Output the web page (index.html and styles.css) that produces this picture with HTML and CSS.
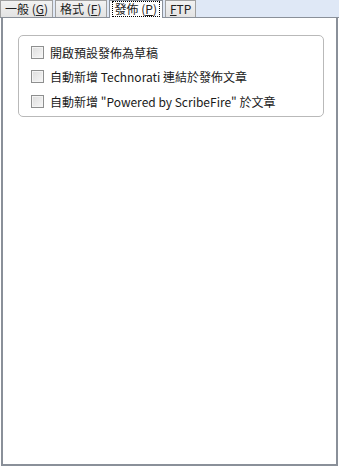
FILE: index.html
```html
<!doctype html>
<html lang="zh-Hant">
<head>
    <meta charset="UTF-8">
    <title>發佈</title>
    <link rel="stylesheet" href="styles.css">
</head>
<body>
    <div class="tabs">
        <div class="tab">一般 (<u>G</u>)</div>
        <div class="tab">格式 (<u>F</u>)</div>
        <div class="tab active"><span class="focus">發佈 (<u>P</u>)</span></div>
        <div class="tab"><u>F</u>TP</div>
    </div>
    <div class="panel">
        <div class="group">
            <label class="row"><span class="box"></span>開啟預設發佈為草稿</label>
            <label class="row"><span class="box"></span>自動新增 Technorati 連結於發佈文章</label>
            <label class="row"><span class="box"></span>自動新增 "Powered by ScribeFire" 於文章</label>
        </div>
    </div>
</body>
</html>
```
FILE: styles.css
```css
html, body {
    margin: 0;
    height: 100%;
}

body {
    display: flex;
    flex-direction: column;
    background: #fff;
    font-family: "Noto Sans CJK TC", "Noto Sans", sans-serif;
    font-size: 12px;
    color: #1a1a1a;
}

.tabs {
    display: flex;
    gap: 2px;
    height: 18px;
    background: #dfe8f6;
    border-bottom: 1px solid #8a9099;
    box-sizing: border-box;
}

.tab {
    height: 17px;
    padding: 0 4px;
    line-height: 16px;
    box-sizing: border-box;
    border: 1px solid #a0a0a0;
    border-bottom: none;
    background: linear-gradient(#f2f2f2, #e3e3e3);
    color: #222;
    white-space: nowrap;
}

.tab.active {
    height: 18px;
    background: #fff;
    margin-bottom: -1px;
    border-color: #8a9099;
    padding: 0 2px;
}

.focus {
    display: inline-block;
    padding: 0 2px;
    line-height: 14px;
    border: 1px dotted #000;
}

.panel {
    flex: 1;
    margin: 0 1px;
    border: 2px solid #8a9099;
    border-top: none;
    padding: 17px 12px 0 15px;
}

.group {
    border: 1px solid #b9b9b9;
    border-radius: 5px;
    padding: 7px 12px 6px 12px;
    display: flex;
    flex-direction: column;
    gap: 6.5px;
}

.row {
    display: flex;
    align-items: center;
    gap: 6px;
    height: 18px;
}

.box {
    width: 11px;
    height: 11px;
    border: 1px solid #8e8f8f;
    background: linear-gradient(135deg, #dcdcdc, #f7f7f7);
    box-shadow: inset 0 0 0 1px #f4f4f4;
    flex: none;
}
```
